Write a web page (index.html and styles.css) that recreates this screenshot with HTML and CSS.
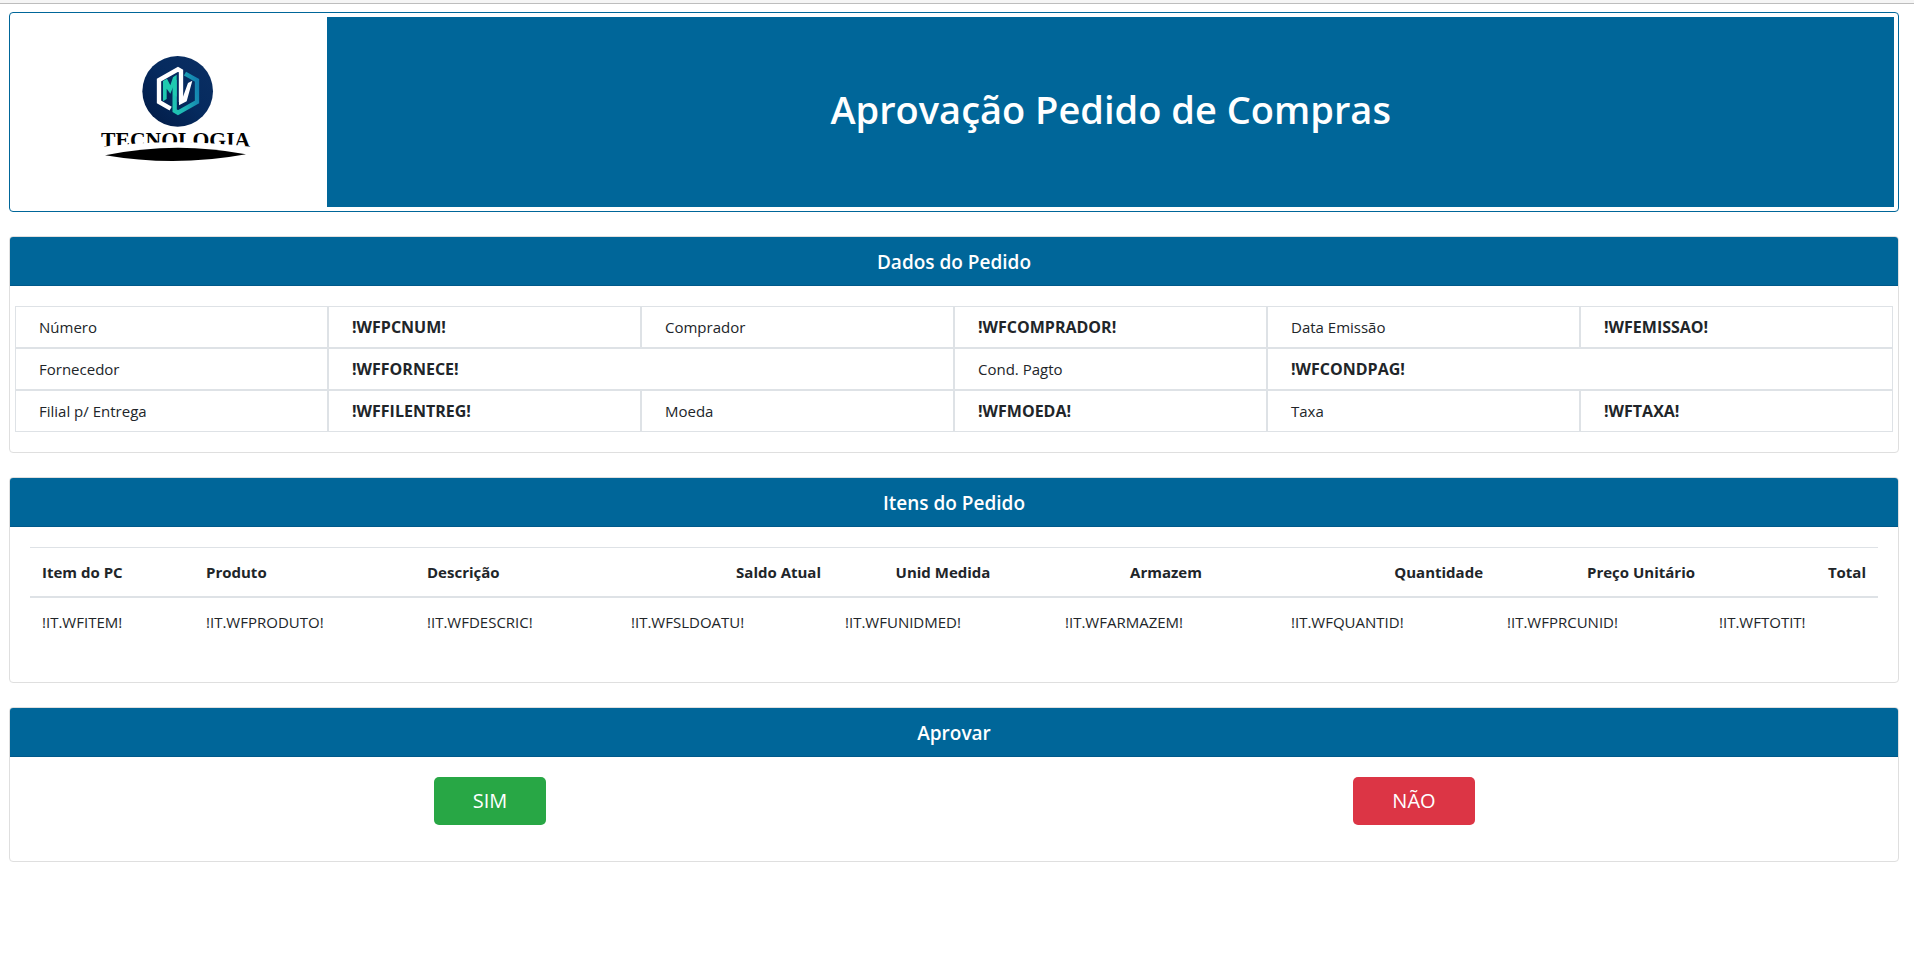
FILE: index.html
```html
<!DOCTYPE html>
<html lang="pt-BR">
<head>
<meta charset="utf-8">
<title>Aprovação Pedido de Compras</title>
<link rel="stylesheet" href="styles.css">
</head>
<body>
<div class="topline"></div>
<main class="page">
  <header class="banner">
    <div class="banner-logo">
      <svg class="logo" viewBox="273 156 480 360" role="img" aria-label="MV Tecnologia">
        <defs>
          <linearGradient id="disc" x1="1" y1="0" x2="0" y2="1">
            <stop offset="0" stop-color="#0b2f63"/>
            <stop offset=".5" stop-color="#052a5e"/>
            <stop offset="1" stop-color="#021a44"/>
          </linearGradient>
          <linearGradient id="teal" gradientUnits="userSpaceOnUse" x1="500" y1="290" x2="597" y2="270">
            <stop offset="0" stop-color="#1fcab0"/>
            <stop offset=".45" stop-color="#1fb5b5"/>
            <stop offset="1" stop-color="#1380b0"/>
          </linearGradient>
        </defs>
        <circle cx="533" cy="274" r="106" fill="url(#disc)"/>
        <path d="M555 221 L591 241 V306 L534 338 L524 332 V240" fill="none" stroke="url(#teal)" stroke-width="13"/>
        <path d="M489 304 V243 L501 236 L511 256 L519 232 L530 224 V290 L519 284 V262 L511 281 L500 266 V297 Z" fill="#1fcab0"/>
        <path d="M512 326 L477 306 V240 L534 208 L543 213 V306" fill="none" stroke="#fff" stroke-width="13"/>
        <path d="M537 274 L549 270 V290 L564 249 L577 242 L560 304 L537 316 Z" fill="#fff"/>
        <text class="logo-text" x="527" y="441" text-anchor="middle">TECNOLOGIA</text>
        <path d="M290 442 Q530 411 765 442 V480 H290 Z" fill="#fff"/>
        <path d="M315 466 Q527 422 738 463 Q527 502 315 466 Z"/>
      </svg>
    </div>
    <div class="banner-title"><h1>Aprovação Pedido de Compras</h1></div>
  </header>

  <section class="card">
    <h2 class="card-header">Dados do Pedido</h2>
    <div class="card-body card-body-wide">
      <dl class="data">
        <dt>Número</dt><dd>!WFPCNUM!</dd>
        <dt>Comprador</dt><dd>!WFCOMPRADOR!</dd>
        <dt>Data Emissão</dt><dd>!WFEMISSAO!</dd>
        <dt>Fornecedor</dt><dd class="span2">!WFFORNECE!</dd>
        <dt>Cond. Pagto</dt><dd class="span2">!WFCONDPAG!</dd>
        <dt>Filial p/ Entrega</dt><dd>!WFFILENTREG!</dd>
        <dt>Moeda</dt><dd>!WFMOEDA!</dd>
        <dt>Taxa</dt><dd>!WFTAXA!</dd>
      </dl>
    </div>
  </section>

  <section class="card">
    <h2 class="card-header">Itens do Pedido</h2>
    <div class="card-body">
      <table class="items">
        <colgroup>
          <col class="c-item"><col class="c-produto"><col class="c-descricao">
          <col class="c-saldo"><col class="c-unidade"><col class="c-armazem">
          <col class="c-quantidade"><col class="c-preco"><col class="c-total">
        </colgroup>
        <thead>
          <tr>
            <th scope="col">Item do PC</th>
            <th scope="col">Produto</th>
            <th scope="col">Descrição</th>
            <th scope="col" class="right">Saldo Atual</th>
            <th scope="col" class="center">Unid Medida</th>
            <th scope="col" class="center">Armazem</th>
            <th scope="col" class="right">Quantidade</th>
            <th scope="col" class="right">Preço Unitário</th>
            <th scope="col" class="right">Total</th>
          </tr>
        </thead>
        <tbody>
          <tr>
            <td>!IT.WFITEM!</td>
            <td>!IT.WFPRODUTO!</td>
            <td>!IT.WFDESCRIC!</td>
            <td>!IT.WFSLDOATU!</td>
            <td>!IT.WFUNIDMED!</td>
            <td>!IT.WFARMAZEM!</td>
            <td>!IT.WFQUANTID!</td>
            <td>!IT.WFPRCUNID!</td>
            <td>!IT.WFTOTIT!</td>
          </tr>
        </tbody>
      </table>
    </div>
  </section>

  <section class="card">
    <h2 class="card-header">Aprovar</h2>
    <form class="card-body actions">
      <div class="action"><button type="button" class="btn btn-yes">SIM</button></div>
      <div class="action"><button type="button" class="btn btn-no">NÃO</button></div>
    </form>
  </section>
</main>
</body>
</html>
```
FILE: styles.css
```css
*,
*::before,
*::after {
  box-sizing: border-box;
}

body {
  margin: 0;
  background: #fff;
  color: #212529;
  font-family: "Segoe UI", "Open Sans", sans-serif;
  font-size: 15px;
  font-weight: 400;
  line-height: 24px;
}

.topline {
  height: 4px;
  background: #f5f5f5;
  border-bottom: 1px solid #bdbdbd;
}

.page {
  display: flex;
  flex-direction: column;
  gap: 24px;
  padding: 8px 15px 24px 9px;
}

.banner {
  display: grid;
  grid-template-columns: 1fr 5fr;
  padding: 4px;
  border: 1px solid #006699;
  border-radius: 4px;
}

.banner-logo,
.banner-title {
  display: flex;
  align-items: center;
  justify-content: center;
  min-height: 190px;
}

.banner-title {
  padding-bottom: 6px;
  background: #006699;
  color: #fff;
}

.banner-title h1 {
  margin: 0;
  font-size: 38px;
  font-weight: 600;
  line-height: 48px;
}

.logo {
  width: 160px;
  height: 120px;
}

.logo-text {
  font-family: "Liberation Serif", serif;
  font-size: 65px;
  font-weight: 700;
}

.card {
  border: 1px solid #dfdfdf;
  border-radius: 4px;
}

.card-header {
  margin: 0;
  padding: 13px 20px 11px;
  border-bottom: 1px solid #00598a;
  border-radius: 3px 3px 0 0;
  background: #006699;
  color: #fff;
  font-size: 19px;
  font-weight: 600;
  line-height: 24px;
  text-align: center;
}

.card-body {
  padding: 20px;
}

.card-body-wide {
  padding: 20px 5px;
}

.data {
  display: grid;
  grid-template-columns: repeat(6, 1fr);
  margin: 0;
}

.data dt,
.data dd {
  margin: 0;
  padding: 8px 23px;
  border: 1px solid #dee2e6;
}

.data dd {
  font-size: 16px;
  font-weight: 700;
}

.data .span2 {
  grid-column: span 2;
}

.items {
  width: 100%;
  margin-bottom: 16px;
  border-spacing: 0;
  table-layout: fixed;
}

.items th,
.items td {
  padding: 12px;
  text-align: left;
}

.items th {
  border-top: 1px solid #dee2e6;
  border-bottom: 2px solid #dee2e6;
  font-weight: 700;
}

.items .right {
  text-align: right;
}

.items .center {
  text-align: center;
}

.c-item { width: 164px; }
.c-produto { width: 221px; }
.c-descricao { width: 204px; }
.c-saldo { width: 214px; }
.c-unidade { width: 220px; }
.c-armazem { width: 226px; }
.c-quantidade { width: 216px; }
.c-preco { width: 212px; }
.c-total { width: 171px; }

.actions {
  display: grid;
  grid-template-columns: 1fr 1fr;
  padding-bottom: 36px;
}

.action {
  padding-right: 4px;
  text-align: center;
}

.btn {
  display: inline-block;
  height: 48px;
  padding: 0 39px;
  border: 0;
  border-radius: 5px;
  color: #fff;
  font: inherit;
  font-size: 20px;
  vertical-align: top;
}

.btn-yes {
  background: #28a745;
}

.btn-no {
  background: #dc3545;
}
```
